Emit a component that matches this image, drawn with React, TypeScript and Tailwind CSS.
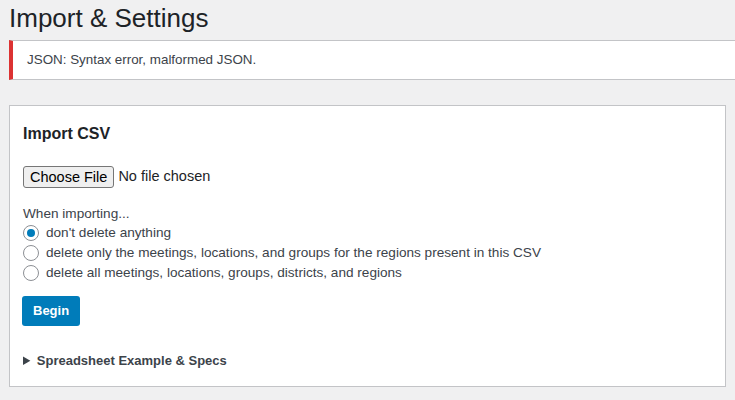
import { useState } from 'react';

const options = [
  { id: 'nothing', label: "don't delete anything" },
  { id: 'regions', label: 'delete only the meetings, locations, and groups for the regions present in this CSV' },
  { id: 'all', label: 'delete all meetings, locations, groups, districts, and regions' },
];

export default function App() {
  const [choice, setChoice] = useState('nothing');

  return (
    <div className="min-h-[400px] bg-[#f0f0f1] pl-[9px] text-[13.6px] text-[#3c434a] font-['Liberation_Sans',Arial,sans-serif]">
      <h1 className="pt-[3px] text-[26px] leading-[30px] font-normal text-[#1d2327]">Import &amp; Settings</h1>

      <div className="mt-[7px] flex h-[40px] items-center border-y border-[#c3c4c7] border-l-4 border-l-[#dc3232] bg-white pl-[14px] text-[13.4px] text-[#3c434a]">
        JSON: Syntax error, malformed JSON.
      </div>

      <div className="mt-[25px] mr-[9px] border border-[#c3c4c7] bg-white px-[13px] pt-[17px] pb-[15px]">
        <h2 className="text-[16px] leading-[22px] font-semibold text-[#1d2327]">Import CSV</h2>

        <div className="mt-[21px] flex items-center gap-[4px]">
          <button className="h-[22px] rounded-[3px] border border-[#767676] bg-[#efefef] px-[6px] text-[14.5px] text-black">
            Choose File
          </button>
          <span className="text-[14.5px] text-[#1d2327]">No file chosen</span>
        </div>

        <p className="mt-[17px] leading-[18px]">When importing...</p>
        <div className="flex flex-col">
          {options.map((o) => (
            <label key={o.id} className="flex h-[20px] cursor-pointer items-center gap-[7px]">
              <span
                onClick={() => setChoice(o.id)}
                className="flex h-[16px] w-[16px] items-center justify-center rounded-full border border-[#8c8f94] bg-white"
              >
                {choice === o.id && <span className="h-[8px] w-[8px] rounded-full bg-[#007cba]" />}
              </span>
              <span>{o.label}</span>
            </label>
          ))}
        </div>

        <button className="mt-[13px] -ml-px h-[30px] rounded-[3px] bg-[#007cba] px-[11px] text-[13px] font-semibold text-white">
          Begin
        </button>

        <details className="mt-[25px]">
          <summary className="cursor-pointer text-[13px] font-semibold text-[#3c434a]">Spreadsheet Example &amp; Specs</summary>
        </details>
      </div>
    </div>
  );
}
